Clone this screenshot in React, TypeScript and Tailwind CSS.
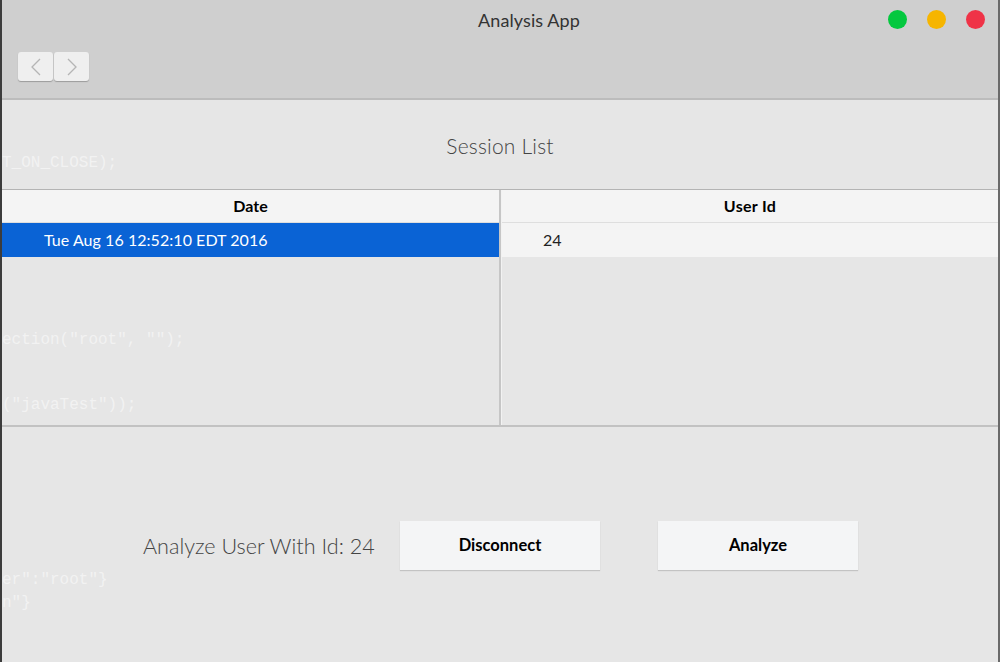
import React from "react";

function Chevron({ dir }: { dir: "left" | "right" }) {
  return (
    <svg width="12" height="18" viewBox="0 0 12 18" fill="none">
      {dir === "left" ? (
        <polyline points="10,1 2,9 10,17" stroke="#b5b5b5" strokeWidth="1.3" />
      ) : (
        <polyline points="2,1 10,9 2,17" stroke="#b5b5b5" strokeWidth="1.3" />
      )}
    </svg>
  );
}

export default function App() {
  const ghost =
    "absolute left-[0px] text-[16px] leading-none text-white/50 whitespace-pre select-none pointer-events-none";
  const mono = { fontFamily: "'Liberation Mono', 'DejaVu Sans Mono', monospace" };
  return (
    <div
      className="relative w-[1000px] h-[662px] overflow-hidden flex flex-col bg-[#e6e6e6] border-l-2 border-r-2 border-l-[#3c3c3c] border-r-[#6a6a6a]"
      style={{ fontFamily: "Lato, 'Noto Sans', sans-serif" }}
    >
      {/* Title bar */}
      <div className="h-[100px] shrink-0 bg-[#cfcfcf] border-b-2 border-[#bcbcbc] flex flex-col">
        <div className="h-[40px] flex items-center relative">
          <div className="flex-1 text-center text-[18px] text-[#333] pl-[58px] tracking-[0.1px]">
            Analysis App
          </div>
          <div className="absolute right-[13px] top-[10px] flex gap-[20px]">
            <div className="w-[19px] h-[19px] rounded-full bg-[#04c83f]" />
            <div className="w-[19px] h-[19px] rounded-full bg-[#f6b500]" />
            <div className="w-[19px] h-[19px] rounded-full bg-[#ef3347]" />
          </div>
        </div>
        <div className="pl-[16px] pt-[12px] flex gap-[1px]">
          <div className="w-[35px] h-[29px] rounded-[3px] bg-[#efefef] shadow-[0_1px_1px_rgba(0,0,0,0.25)] flex items-center justify-center">
            <Chevron dir="left" />
          </div>
          <div className="w-[35px] h-[29px] rounded-[3px] bg-[#efefef] shadow-[0_1px_1px_rgba(0,0,0,0.25)] flex items-center justify-center">
            <Chevron dir="right" />
          </div>
        </div>
      </div>

      {/* Session List heading */}
      <div className="h-[89px] shrink-0 flex items-center justify-center">
        <span className="text-[21px] font-light text-[#444] tracking-[0.2px] pt-[2px]">
          Session List
        </span>
      </div>

      {/* Table */}
      <div className="h-[238px] shrink-0 border-t border-[#b4b4b4] border-b-2 border-b-[#c2c2c2] flex">
        <div className="w-[497px] flex flex-col">
          <div className="h-[33px] bg-[#f4f4f4] border-b border-[#dedede] flex items-center justify-center text-[16px] font-bold text-black">
            Date
          </div>
          <div className="h-[34px] bg-[#0a63d5] flex items-center pl-[42px] text-[16px] text-white tracking-[0.05px]">
            Tue Aug 16 12:52:10 EDT 2016
          </div>
        </div>
        <div className="w-[3px] bg-[#c6c6c6] border-r border-[#f2f2f2]" />
        <div className="flex-1 flex flex-col">
          <div className="h-[33px] bg-[#f4f4f4] border-b border-[#dedede] flex items-center justify-center text-[16px] font-bold text-black tracking-[0.3px]">
            User Id
          </div>
          <div className="h-[34px] bg-[#f4f4f4] flex items-center pl-[41px] text-[16px] text-[#222]">
            24
          </div>
        </div>
      </div>

      {/* Bottom controls */}
      <div className="flex-1 flex items-start pt-[94px] pl-[141px]">
        <span className="text-[21.6px] font-light text-[#444] mt-[9px] w-[257px]">
          Analyze User With Id: 24
        </span>
        <button className="w-[200px] h-[49px] bg-[#f4f5f6] shadow-[0_1px_1px_rgba(0,0,0,0.15)] text-[16.5px] font-bold text-black">
          Disconnect
        </button>
        <button className="ml-[58px] w-[200px] h-[49px] bg-[#f4f5f6] shadow-[0_1px_1px_rgba(0,0,0,0.15)] text-[16.5px] font-bold text-black">
          Analyze
        </button>
      </div>

      {/* faint bleed-through text */}
      <div className={`${ghost} top-[155px]`} style={mono}>
        {"T_ON_CLOSE);"}
      </div>
      <div className={`${ghost} top-[332px]`} style={mono}>
        {'ection("root", "");'}
      </div>
      <div className={`${ghost} top-[397px]`} style={mono}>
        {'("javaTest"));'}
      </div>
      <div className={`${ghost} top-[572px]`} style={mono}>
        {'er":"root"}'}
      </div>
      <div className={`${ghost} top-[595px]`} style={mono}>
        {'n"}'}
      </div>
    </div>
  );
}
